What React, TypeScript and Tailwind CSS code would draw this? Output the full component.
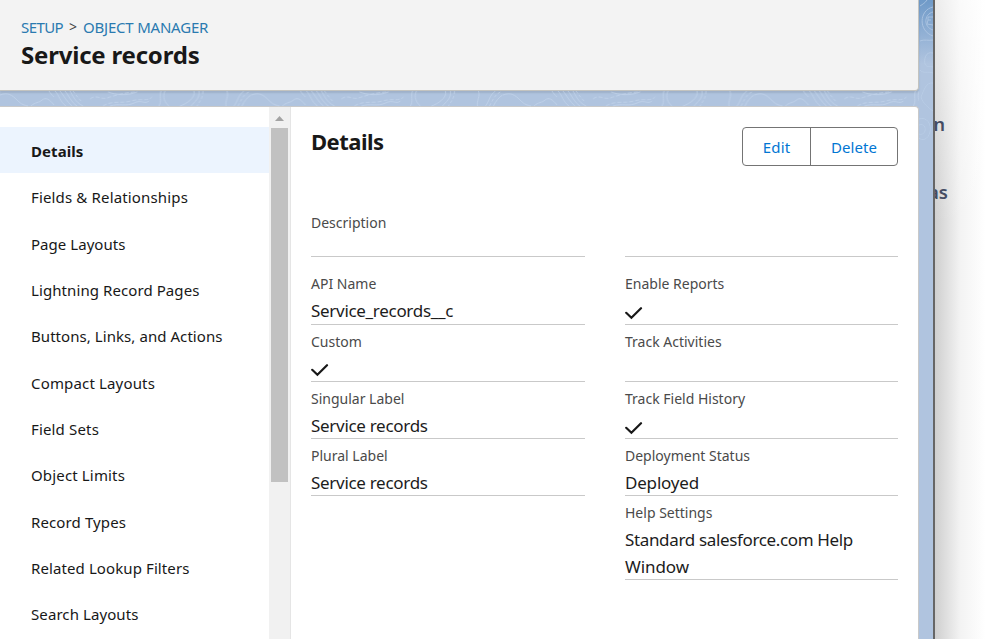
import type { ReactNode } from "react";

function Check() {
  return (
    <svg width="18" height="14" viewBox="0 0 18 14" fill="none" className="block">
      <path d="M1.2 6.8 L6.4 11.7 L16 2.2" stroke="#181818" strokeWidth="2.2" strokeLinecap="round" strokeLinejoin="miter" />
    </svg>
  );
}

function Contours() {
  return (
    <svg width="935" height="107" viewBox="0 0 935 107" fill="none" className="pointer-events-none absolute left-0 top-0">
      <defs>
        <pattern id="topo" x="0" y="91" width="251.5" height="16" patternUnits="userSpaceOnUse">
          <g stroke="#c9daef" strokeWidth="0.9" fill="none" opacity="0.6">
            <path d="M0 4 C8 1 12 4 17 9 S24 14 28 15" />
            <path d="M31 15 C35 11 39 12 42 9 C46 6 49 8 54 14" />
            <path d="M49 0 C50 2 52 4 54 6" />
            <path d="M55 0 C59 4 60 11 66 15" />
            <path d="M60 0 C64 5 67 11 72 15" />
            <path d="M65 0 C69 5 71 11 77 15" />
            <path d="M70 0 C73 5 75 11 83 15" />
            <path d="M73 0 C76 4 78 7 82 11" strokeDasharray="3 2" />
            <path d="M90 8 C96 3 101 9 107 7 S126 1 137 1" strokeDasharray="4 2" />
            <path d="M103 15 C112 9 121 13 131 10 S147 11 152 6" strokeDasharray="4 2" />
            <path d="M110 15 C119 12 126 16 134 12 S144 14 149 10" />
            <path d="M108 1 C116 4 127 5 137 1" />
            <path d="M161 0 C159 5 162 10 159 15" />
            <path d="M165 0 C162 6 165 12 169 15" />
            <path d="M194 0 C196 7 186 13 180 15" />
            <path d="M199 0 C200 8 194 11 191 15" />
            <path d="M203 0 C203 7 200 10 197 15" strokeDasharray="3 2" />
            <path d="M227 0 C229 5 225 10 226 15" />
            <path d="M234 15 C238 10 238 4 244 0" />
            <path d="M238 15 C242 8 243 4 249 1" strokeDasharray="3 2" />
            <path d="M242 15 C244 10 248 6 251 4" />
          </g>
        </pattern>
      </defs>
      <rect x="0" y="91" width="919" height="16" fill="url(#topo)" />
    </svg>
  );
}

function EdgeContours() {
  return (
    <svg width="14" height="170" viewBox="0 0 14 170" fill="none" className="block">
      <g stroke="#bdd1ea" strokeWidth="1" opacity="0.65">
        <path d="M1 6 C4 4 6 3 8 0" />
        <path d="M14 7 C0 10 -1 31 14 36" />
        <path d="M14 12 C5 14 4 27 14 30" />
        <path d="M14 17 L9 17 L9 20 L12 20 M9 20 L8 24 L14 25" />
        <path d="M1 41 C5 39 10 41 14 40" />
        <path d="M14 53 C6 51 5 60 6 64 C8 68 11 66 14 67" />
        <path d="M1 70 C4 74 9 71 14 73" />
        <path d="M14 83 C7 82 5 90 2 97 C4 104 10 108 14 111" />
        <path d="M0 119 C8 116 13 125 11 132 C9 140 3 141 0 138" />
        <path d="M0 125 C5 123 7 128 6 131 C5 134 2 135 0 134" />
      </g>
    </svg>
  );
}

const nav: [string, string][] = [
  ["Details", "font-bold tracking-[0.08px]"],
  ["Fields & Relationships", "tracking-[0.154px]"],
  ["Page Layouts", "tracking-[0.046px]"],
  ["Lightning Record Pages", "tracking-[0.085px]"],
  ["Buttons, Links, and Actions", "tracking-[0.062px]"],
  ["Compact Layouts", "tracking-[0.16px]"],
  ["Field Sets", "tracking-[0.159px]"],
  ["Object Limits", "tracking-[0.153px]"],
  ["Record Types", "tracking-[0.113px]"],
  ["Related Lookup Filters", "tracking-[0.1px]"],
  ["Search Layouts", "tracking-[0.09px]"],
];

function Field({ label, children, className = "min-h-[57px] pt-[7px]" }: { label?: string; children?: ReactNode; className?: string }) {
  return (
    <div className={`flex flex-col border-b border-[#c9c9c9] ${className}`}>
      <div className="h-5 text-[14px] leading-5 text-[#4a4a4a]">{label}</div>
      <div className="-mb-px pt-[3px] text-[17px] leading-[27px] tracking-[-0.3px] text-[#1c1c1c]">{children}</div>
    </div>
  );
}

export default function App() {
  return (
    <div className="flex h-[639px] w-[998px] overflow-hidden bg-white font-['Noto_Sans','Open_Sans',sans-serif] text-[#181818]">
      <div className="relative flex w-[935px] shrink-0 border-r-2 border-[#666666] bg-[#b0c4df] bg-linear-to-b from-[#6f9ac8] from-0% to-[#b0c4df] to-[10%]">
        <Contours />
        <div className="flex w-[919px] shrink-0 flex-col gap-[15px]">
          <header className="flex h-[91px] shrink-0 flex-col rounded-br border-b border-r border-[#c3c3bf] bg-[#f3f3f3] pl-[21px] pt-[17px] shadow-[0_2px_2px_rgba(0,0,0,0.1)]">
            <nav className="flex h-5 items-center text-[15px] leading-5 text-[#2a7ab0]">
              <span className="w-[48px] shrink-0 tracking-[-0.58px]">SETUP</span>
              <span className="w-[14px] shrink-0 text-[14px] text-[#444444]">&gt;</span>
              <span className="tracking-[-0.21px]">OBJECT MANAGER</span>
            </nav>
            <h1 className="text-[24px] font-bold leading-[36px] tracking-[-0.2px]">Service records</h1>
          </header>
          <main className="flex min-h-0 flex-1 rounded-tr border-r border-t border-[#c9c9c9] bg-white">
            <aside className="flex w-[291px] shrink-0 border-r border-[#e5e5e5]">
              <ul className="w-[269px] pt-5">
                {nav.map(([name, cls], i) => (
                  <li key={name} className={`flex h-[46.37px] items-center pb-px pl-[31px] pt-[2.95px] text-[15px] ${i === 0 ? "bg-[#ecf4fe]" : ""}`}>
                    <span className={`whitespace-nowrap ${cls}`}>{name}</span>
                  </li>
                ))}
              </ul>
              <div className="flex w-[21px] flex-col items-center bg-[#f1f1f1]">
                <div className="flex h-[21px] items-center justify-center pt-[2px]">
                  <svg width="9" height="5" viewBox="0 0 9 5" className="block"><path d="M0 5 L4.5 0 L9 5 Z" fill="#a3a3a3" /></svg>
                </div>
                <div className="h-[354px] w-[17px] bg-[#c1c1c1]" />
              </div>
            </aside>
            <section className="flex-1 pl-5 pr-5 pt-5">
              <div className="flex justify-between">
                <h2 className="text-[22px] font-bold leading-[28px] tracking-[-0.5px]">Details</h2>
                <div className="flex h-[39px] rounded border border-[#747474] text-[15px] leading-[39px] text-[#0176d3]">
                  <button className="flex w-[68px] justify-center border-r border-[#747474] tracking-[0.16px]">Edit</button>
                  <button className="flex w-[86px] justify-center tracking-[0.06px]">Delete</button>
                </div>
              </div>
              <div className="mt-[41px] grid grid-cols-[274px_273px] justify-between">
                <Field label="Description" className="h-[50px] pt-[6px]" />
                <Field className="h-[50px] pt-[6px]" />
                <div className="pt-[10px]">
                  <Field label="API Name" className="h-[58px] pt-[7px]">Service_records__c</Field>
                  <Field label="Custom"><div className="flex h-[27px] items-center pt-[3px]"><Check /></div></Field>
                  <Field label="Singular Label">Service records</Field>
                  <Field label="Plural Label">Service records</Field>
                </div>
                <div className="pt-[10px]">
                  <Field label="Enable Reports" className="h-[58px] pt-[7px]"><div className="flex h-[27px] items-center pt-1"><Check /></div></Field>
                  <Field label="Track Activities" />
                  <Field label="Track Field History"><div className="flex h-[27px] items-center pt-1"><Check /></div></Field>
                  <Field label="Deployment Status"><span className="tracking-[-0.19px]">Deployed</span></Field>
                  <Field label="Help Settings"><span className="tracking-[-0.35px]">Standard salesforce.com Help <span className="tracking-[-0.08px]">Window</span></span></Field>
                </div>
              </div>
            </section>
          </main>
        </div>
        <EdgeContours />
      </div>
      <div className="flex flex-1 bg-linear-to-r from-[#cfcfcf] via-[#f3f3f3] via-[40%] to-white to-[80%]">
        <div className="h-full flex-1 bg-linear-to-b from-white/60 to-transparent to-[35%] pt-[110px] text-[18.5px] font-semibold leading-[27px] text-[#444c63]">
          <div className="flex w-[10px] justify-end overflow-hidden">n</div>
          <div className="mt-[41px] flex w-[13px] justify-end overflow-hidden">as</div>
        </div>
      </div>
    </div>
  );
}
